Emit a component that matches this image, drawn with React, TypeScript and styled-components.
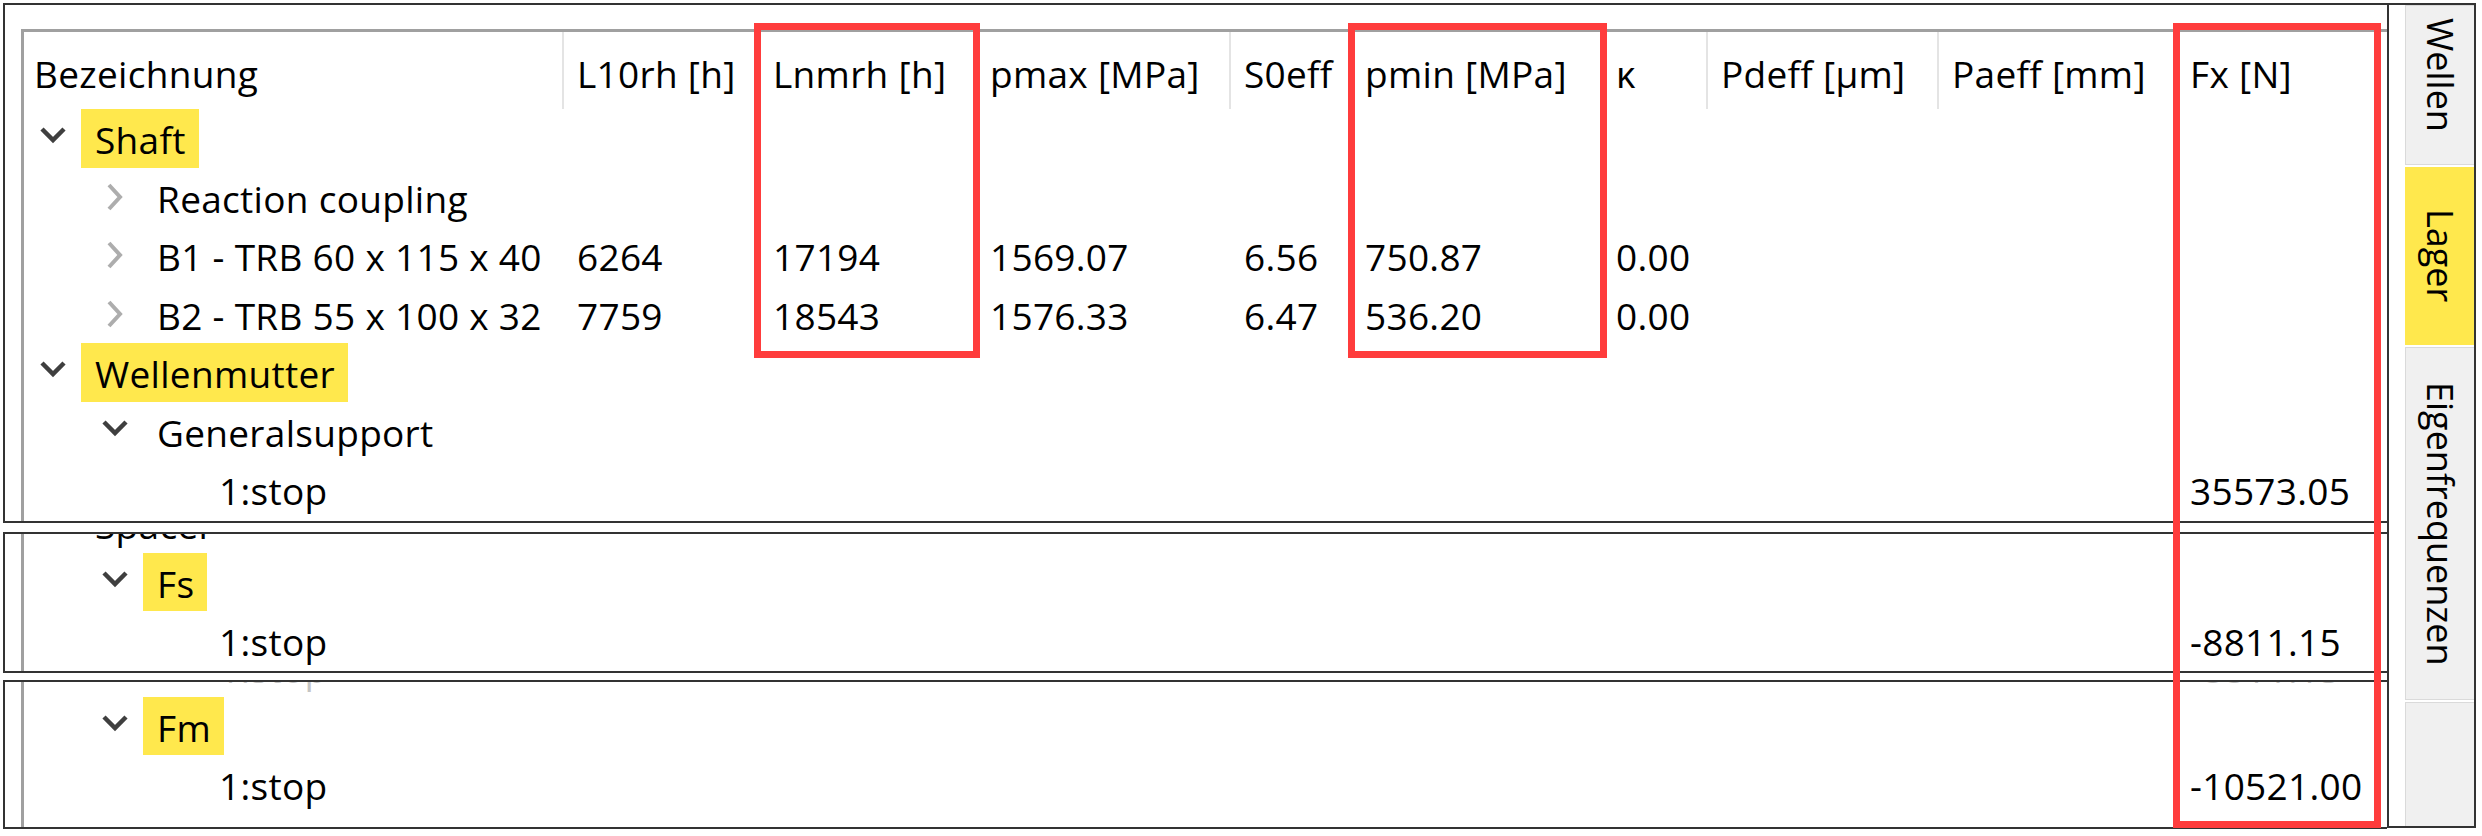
import React from "react";
import styled, { createGlobalStyle } from "styled-components";

const GlobalStyle = createGlobalStyle`
  html, body {
    margin: 0;
    padding: 0;
    background: #fff;
  }
  body {
    font-family: "Open Sans", "Noto Sans", sans-serif;
    color: #000;
  }
`;

const COLS = "540px 196px 217px 254px 121px 251px 105px 231px 238px 1fr";
const INDENT = 62;

type RowData = {
  level: number;
  label: string;
  toggle?: "open" | "closed";
  mark?: boolean;
  faint?: boolean;
  values?: string[];
};

const headers = [
  "Bezeichnung",
  "L10rh [h]",
  "Lnmrh [h]",
  "pmax [MPa]",
  "S0eff",
  "pmin [MPa]",
  "κ",
  "Pdeff [µm]",
  "Paeff [mm]",
  "Fx [N]",
];

const shaftRows: RowData[] = [
  { level: 0, label: "Shaft", toggle: "open", mark: true },
  { level: 1, label: "Reaction coupling", toggle: "closed" },
  {
    level: 1,
    label: "B1 - TRB 60 x 115 x 40",
    toggle: "closed",
    values: ["6264", "17194", "1569.07", "6.56", "750.87", "0.00"],
  },
  {
    level: 1,
    label: "B2 - TRB 55 x 100 x 32",
    toggle: "closed",
    values: ["7759", "18543", "1576.33", "6.47", "536.20", "0.00"],
  },
  { level: 0, label: "Wellenmutter", toggle: "open", mark: true },
  { level: 1, label: "Generalsupport", toggle: "open" },
  { level: 2, label: "1:stop", values: ["", "", "", "", "", "", "", "", "35573.05"] },
];

const spacerRows: RowData[] = [
  { level: 0, label: "Spacer", toggle: "open" },
  { level: 1, label: "Fs", toggle: "open", mark: true },
  { level: 2, label: "1:stop", values: ["", "", "", "", "", "", "", "", "-8811.15"] },
];

const nutRows: RowData[] = [
  { level: 2, label: "1:stop", faint: true, values: ["", "", "", "", "", "", "", "", "-8811.15"] },
  { level: 1, label: "Fm", toggle: "open", mark: true },
  { level: 2, label: "1:stop", values: ["", "", "", "", "", "", "", "", "-10521.00"] },
];

const Chevron = ({ open }: { open: boolean }) =>
  open ? (
    <svg width="26" height="26" viewBox="0 0 26 26">
      <polyline points="2,4 13,15 24,4" fill="none" stroke="#3f3f3f" strokeWidth="4.5" />
    </svg>
  ) : (
    <svg width="18" height="28" viewBox="0 0 18 28">
      <polyline points="3,2 14,14 3,26" fill="none" stroke="#adadad" strokeWidth="4" />
    </svg>
  );

const TreeRow = ({ row }: { row: RowData }) => (
  <Row $faint={row.faint}>
    <NameCell $level={row.level}>
      <Toggle>{row.toggle && <Chevron open={row.toggle === "open"} />}</Toggle>
      <Label $mark={row.mark}>{row.label}</Label>
    </NameCell>
    {Array.from({ length: 9 }).map((_, i) => (
      <ValueCell key={i}>{row.values?.[i] ?? ""}</ValueCell>
    ))}
  </Row>
);

const App = () => {
  return (
    <>
      <GlobalStyle />
      <Screen>
        <PanelStack>
          <Panel $height={520} $padTop={24}>
            <Table $top>
              <HeaderRow>
                {headers.map((h, i) => (
                  <HeaderCell key={h} $first={i === 0} $last={i === headers.length - 1}>
                    {h}
                  </HeaderCell>
                ))}
              </HeaderRow>
              {shaftRows.map((r, i) => (
                <TreeRow key={i} row={r} />
              ))}
            </Table>
          </Panel>
          <Panel $height={141} $gap={9}>
            <Table>
              <Scrolled $offset={-40}>
                {spacerRows.map((r, i) => (
                  <TreeRow key={i} row={r} />
                ))}
              </Scrolled>
            </Table>
          </Panel>
          <Panel $height={149} $gap={7}>
            <Table>
              <Scrolled $offset={-44}>
                {nutRows.map((r, i) => (
                  <TreeRow key={i} row={r} />
                ))}
              </Scrolled>
            </Table>
          </Panel>
        </PanelStack>

        <TabBox>
          <Tab $height={160} $shift={20}>Wellen</Tab>
          <Tab $height={178} $active>
            Lager
          </Tab>
          <Tab $height={353}>Eigenfrequenzen</Tab>
          <TabFiller />
        </TabBox>

        <Marker style={{ left: 754, top: 23, width: 226, height: 335 }} />
        <Marker style={{ left: 1348, top: 23, width: 259, height: 335 }} />
        <Marker style={{ left: 2173, top: 23, width: 208, height: 805 }} />
      </Screen>
    </>
  );
};

export default App;

const Screen = styled.div`
  position: relative;
  display: flex;
  align-items: flex-start;
  width: 2482px;
  height: 836px;
  padding: 3px 0 0 3px;
  box-sizing: border-box;
  overflow: hidden;
`;

const PanelStack = styled.div`
  display: flex;
  flex-direction: column;
  width: 2384px;
  flex: none;
`;

const Panel = styled.div<{ $height: number; $gap?: number; $padTop?: number }>`
  height: ${(p) => p.$height}px;
  margin-top: ${(p) => p.$gap ?? 0}px;
  padding: ${(p) => p.$padTop ?? 0}px 0 0 16px;
  box-sizing: border-box;
  border: 2px solid #333;
  border-right: none;
  background: #fff;
  overflow: hidden;
`;

const Table = styled.div<{ $top?: boolean }>`
  height: 100%;
  box-sizing: border-box;
  border-left: 3px solid #a0a0a0;
  border-top: ${(p) => (p.$top ? "3px solid #a0a0a0" : "none")};
  font-size: 37px;
  line-height: 50px;
  letter-spacing: 0.3px;
  overflow: hidden;
`;

const Scrolled = styled.div<{ $offset: number }>`
  margin-top: ${(p) => p.$offset}px;
`;

const HeaderRow = styled.div`
  display: grid;
  grid-template-columns: ${COLS};
  height: 77px;
`;

const HeaderCell = styled.div<{ $first?: boolean; $last?: boolean }>`
  display: flex;
  align-items: center;
  padding: 6px 0 0 ${(p) => (p.$first ? 10 : 13)}px;
  border-right: ${(p) => (p.$last ? "none" : "2px solid #e4e4e4")};
  white-space: nowrap;
  overflow: hidden;
`;

const Row = styled.div<{ $faint?: boolean }>`
  display: grid;
  grid-template-columns: ${COLS};
  height: 58.5px;
  color: ${(p) => (p.$faint ? "#c4c4c4" : "#000")};
`;

const NameCell = styled.div<{ $level: number }>`
  display: flex;
  align-items: stretch;
  padding-left: ${(p) => p.$level * INDENT}px;
  white-space: nowrap;
  overflow: hidden;
`;

const Toggle = styled.div`
  flex: none;
  width: 57px;
  display: flex;
  align-items: center;
  justify-content: center;
`;

const Label = styled.span<{ $mark?: boolean }>`
  display: flex;
  align-items: center;
  padding: 4px 13px 0 14px;
  background: ${(p) => (p.$mark ? "#ffe84d" : "transparent")};
`;

const ValueCell = styled.div`
  display: flex;
  align-items: center;
  padding: 4px 0 0 13px;
  white-space: nowrap;
  overflow: hidden;
`;

const TabBox = styled.div`
  flex: none;
  display: flex;
  flex-direction: column;
  gap: 2px;
  width: 89px;
  height: 825px;
  padding-left: 16px;
  box-sizing: border-box;
  border: 2px solid #333;
  background: #fff;
`;

const Tab = styled.div<{ $height: number; $active?: boolean; $shift?: number }>`
  flex: none;
  height: ${(p) => p.$height}px;
  box-sizing: border-box;
  padding-bottom: ${(p) => p.$shift ?? 0}px;
  writing-mode: vertical-rl;
  text-align: center;
  line-height: 67px;
  font-size: 36px;
  background: ${(p) => (p.$active ? "#ffe84d" : "#f0f0f0")};
  border: 1px solid ${(p) => (p.$active ? "#ffe84d" : "#dadada")};
  border-right: none;
  white-space: nowrap;
`;

const TabFiller = styled.div`
  flex: 1;
  background: #f0f0f0;
  border-left: 1px solid #dadada;
  border-top: 1px solid #dadada;
`;

const Marker = styled.div`
  position: absolute;
  box-sizing: border-box;
  border: 7px solid #ff3c3c;
  pointer-events: none;
`;
